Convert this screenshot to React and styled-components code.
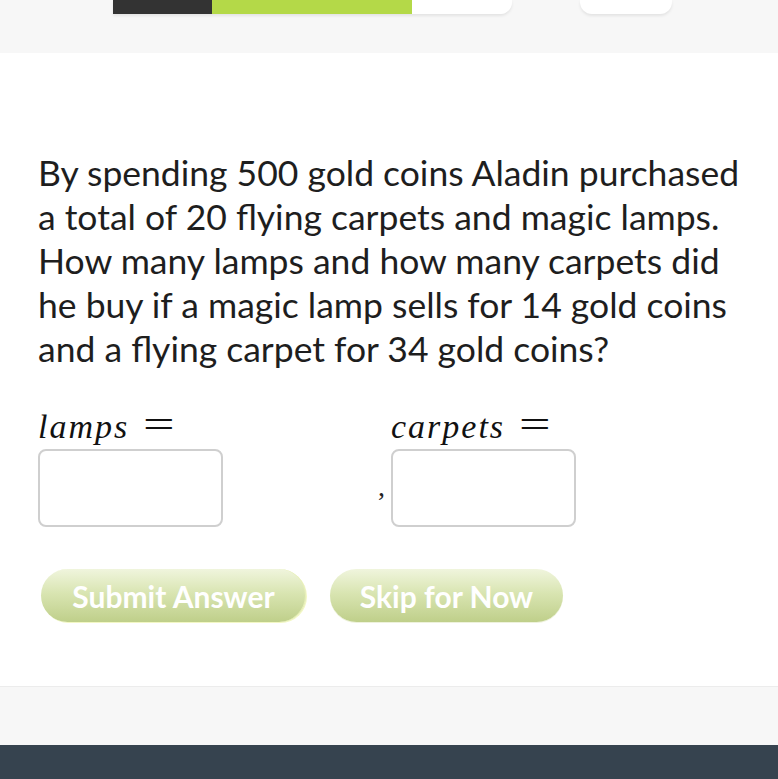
import React from "react";
import styled, { createGlobalStyle } from "styled-components";

const Global = createGlobalStyle`
  html, body { margin: 0; padding: 0; background: #f7f7f7; }
  body { font-family: Lato, "Open Sans", sans-serif; }
`;

const Page = styled.div`
  width: 778px;
  height: 779px;
  overflow: hidden;
  display: flex;
  flex-direction: column;
`;

const Header = styled.div`
  height: 53px;
  background: #f7f7f7;
  display: flex;
  align-items: flex-start;
  padding-left: 113px;
  box-sizing: border-box;
`;

const Progress = styled.div`
  width: 399px;
  height: 14px;
  display: flex;
  border-radius: 0 0 12px 0;
  overflow: hidden;
  box-shadow: 0 2px 3px rgba(0, 0, 0, 0.08);
`;

const Segment = styled.div`
  width: ${(p) => p.w}px;
  background: ${(p) => p.c};
`;

const Tab = styled.div`
  width: 92px;
  height: 14px;
  margin-left: 68px;
  background: #fff;
  border-radius: 0 0 12px 12px;
  box-shadow: 0 2px 3px rgba(0, 0, 0, 0.08);
`;

const Main = styled.div`
  background: #fff;
  height: 634px;
  padding: 98px 30px 0 38px;
  box-sizing: border-box;
  border-bottom: 1px solid #ececec;
  box-shadow: 0 2px 3px rgba(0, 0, 0, 0.05);
`;

const Question = styled.p`
  margin: 0;
  font-size: 35.5px;
  line-height: 44px;
  color: #1e1e1e;
`;

const Answers = styled.div`
  display: flex;
  align-items: flex-start;
  margin-top: 40px;
`;

const Field = styled.div`
  display: flex;
  flex-direction: column;
  width: ${(p) => p.w}px;
`;

const MathLabel = styled.div`
  font-family: "Liberation Serif", "DejaVu Serif", serif;
  font-style: italic;
  font-size: 34px;
  line-height: 28px;
  color: #111;
  height: 38px;
  letter-spacing: 2px;
  display: flex;
  align-items: baseline;

  span {
    font-style: normal;
    font-size: 40px;
    letter-spacing: 0;
    margin-left: 14px;
    transform: scaleX(1.4);
    transform-origin: left center;
  }
`;

const Input = styled.input`
  width: 185px;
  height: 78px;
  box-sizing: border-box;
  border: 2px solid #cfcfcf;
  border-radius: 8px;
  background: #fff;
  outline: none;
  font-size: 24px;
  margin: 0;
`;

const Comma = styled.div`
  font-family: "Liberation Serif", serif;
  font-size: 28px;
  color: #222;
  width: 13px;
  margin-top: 56px;
  line-height: 40px;
`;

const Buttons = styled.div`
  display: flex;
  gap: 24px;
  margin-top: 42px;
  margin-left: 3px;
`;

const Pill = styled.button`
  height: 53px;
  width: ${(p) => p.w}px;
  border-radius: 27px;
  border: none;
  background: linear-gradient(to bottom, #f0f5dd 0%, #d9e5b2 45%, #bfcf8a 100%);
  box-shadow: ${(p) => (p.edge ? "1px 1px 0 #f2f7c4, inset -1px 0 0 #e8f0b8" : "0 1px 0 #eef2dc")};
  color: #fff;
  font-family: Lato, sans-serif;
  font-weight: 700;
  font-size: 30px;
  padding: 0;
  cursor: pointer;
`;

const Gray = styled.div`
  height: 58px;
  background: #f7f7f7;
`;

const Footer = styled.div`
  flex: 1;
  background: #36434f;
`;

export default function App() {
  return (
    <Page>
      <Global />
      <Header>
        <Progress>
          <Segment w={99} c="#333333" />
          <Segment w={200} c="#b4d948" />
          <Segment w={100} c="#ffffff" />
        </Progress>
        <Tab />
      </Header>
      <Main>
        <Question>
          By spending 500 gold coins Aladin purchased a total of 20 flying carpets and magic lamps.
          How many lamps and how many carpets did he buy if a magic lamp sells for 14 gold coins
          and a flying carpet for 34 gold coins?
        </Question>
        <Answers>
          <Field w={340}>
            <MathLabel>
              lamps<span>=</span>
            </MathLabel>
            <Input />
          </Field>
          <Comma>,</Comma>
          <Field w={200}>
            <MathLabel>
              carpets<span>=</span>
            </MathLabel>
            <Input />
          </Field>
        </Answers>
        <Buttons>
          <Pill w={265} edge>Submit Answer</Pill>
          <Pill w={233}>Skip for Now</Pill>
        </Buttons>
      </Main>
      <Gray />
      <Footer />
    </Page>
  );
}
